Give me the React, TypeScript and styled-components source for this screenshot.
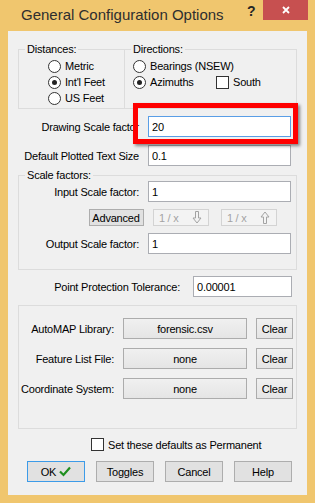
import React from "react";
import styled, { createGlobalStyle } from "styled-components";

const Global = createGlobalStyle`
  html, body { margin: 0; padding: 0; }
  body {
    font-family: "Liberation Sans", Arial, sans-serif;
    font-size: 11px;
    letter-spacing: -0.2px;
    color: #000;
  }
  * { box-sizing: border-box; }
`;

const Window = styled.div`
  width: 315px;
  height: 503px;
  background: #f0c66e;
  display: flex;
  flex-direction: column;
`;

const TitleBar = styled.div`
  height: 31px;
  display: flex;
  align-items: flex-start;
`;

const Title = styled.div`
  flex: 1;
  padding: 5px 0 0 21px;
  font-size: 15px;
  line-height: 20px;
  letter-spacing: 0;
  color: #2e2e2e;
  white-space: nowrap;
`;

const HelpGlyph = styled.div`
  width: 8px;
  margin: 4px 8px 0 0;
  font-weight: bold;
  font-size: 14px;
  line-height: 14px;
  color: #262626;
`;

const CloseBtn = styled.div`
  width: 45px;
  height: 20px;
  margin-right: 7px;
  background: #c75050;
  display: flex;
  align-items: center;
  justify-content: center;
`;

const Client = styled.div`
  flex: 1;
  margin: 0 8px 8px;
  background: #f0f0f0;
  position: relative;
  padding: 12px 10px 0 10px;
  display: flex;
  flex-direction: column;
`;

const Highlight = styled.div`
  position: absolute;
  left: 125px;
  top: 72px;
  width: 165px;
  height: 41px;
  border: 5px solid #f00;
  box-shadow: 2px 2px 3px rgba(0, 0, 0, 0.45);
  pointer-events: none;
`;

const TopRow = styled.div`
  display: flex;
`;

const Group = styled.fieldset<{ $w?: number; $h: number; $mt?: number; $flex?: boolean; $ml?: number }>`
  margin: ${(p) => p.$mt ?? 0}px 0 0 ${(p) => p.$ml ?? 0}px;
  padding: 0;
  min-width: 0;
  border: 1px solid #dcdcdc;
  height: ${(p) => p.$h}px;
  ${(p) => (p.$w ? `width: ${p.$w}px; flex: none;` : "")}
  ${(p) => (p.$flex ? "flex: 1;" : "")}
`;

const Legend = styled.legend`
  padding: 0 2px;
  margin-left: 6px;
  line-height: 12px;
  font-size: 11px;
`;

const OptionList = styled.div<{ $pl: number }>`
  display: flex;
  flex-direction: column;
  padding: 3px 0 0 ${(p) => p.$pl}px;
`;

const OptionRow = styled.div`
  display: flex;
  align-items: center;
  height: 16px;
`;

const Option = styled.div<{ $minW?: number }>`
  display: flex;
  align-items: center;
  ${(p) => (p.$minW ? `min-width: ${p.$minW}px;` : "")}
`;

const RadioCircle = styled.span<{ $on?: boolean }>`
  width: 13px;
  height: 13px;
  border-radius: 50%;
  border: 1px solid #333;
  background: #fff;
  display: inline-flex;
  align-items: center;
  justify-content: center;
  flex: none;
  &::after {
    content: "";
    width: 5px;
    height: 5px;
    border-radius: 50%;
    background: #222;
    display: ${(p) => (p.$on ? "block" : "none")};
  }
`;

const CheckSquare = styled.span`
  width: 13px;
  height: 13px;
  border: 1px solid #333;
  background: #fff;
  flex: none;
`;

const OptionText = styled.span`
  margin-left: 4px;
  white-space: nowrap;
`;

const Field = styled.div<{ $labelW: number; $inputW: number; $gap?: number; $mt?: number }>`
  display: grid;
  grid-template-columns: ${(p) => p.$labelW}px ${(p) => p.$inputW}px;
  column-gap: ${(p) => p.$gap ?? 9}px;
  align-items: center;
  margin-top: ${(p) => p.$mt ?? 0}px;
`;

const FieldLabel = styled.label`
  text-align: right;
  white-space: nowrap;
`;

const TextInput = styled.input<{ $focus?: boolean }>`
  height: 21px;
  width: 100%;
  margin: 0;
  background: #fff;
  border: 1px solid ${(p) => (p.$focus ? "#5a9ee6" : "#abadb3")};
  padding: 0 3px;
  font-family: inherit;
  font-size: 11px;
  letter-spacing: -0.2px;
  color: #000;
  outline: none;
  border-radius: 0;
`;

const ButtonRowSmall = styled.div`
  display: flex;
  margin-top: 7px;
  padding-left: 70px;
`;

const SmallBtn = styled.button<{ $w: number; $ml?: number; $disabled?: boolean }>`
  width: ${(p) => p.$w}px;
  height: 17px;
  margin: 0 0 0 ${(p) => p.$ml ?? 0}px;
  padding: 0 6px 0 5px;
  font-family: inherit;
  font-size: 11px;
  letter-spacing: -0.2px;
  border: 1px solid ${(p) => (p.$disabled ? "#d3d3d3" : "#adadad")};
  background: ${(p) => (p.$disabled ? "#f3f3f3" : "#e1e1e1")};
  color: ${(p) => (p.$disabled ? "#a3a3a3" : "#000")};
  display: flex;
  align-items: center;
  justify-content: ${(p) => (p.$disabled ? "space-between" : "center")};
  border-radius: 0;
`;

const Recip = styled.span`
  letter-spacing: 2.5px;
`;

const LibRows = styled.div`
  display: flex;
  flex-direction: column;
  gap: 9px;
  padding-top: 12px;
`;

const LibRow = styled.div`
  display: grid;
  grid-template-columns: 95px 124px 37px;
  column-gap: 9px;
  align-items: center;
`;

const LibButton = styled.button`
  height: 21px;
  margin: 0;
  padding: 0;
  font-family: inherit;
  font-size: 11px;
  letter-spacing: -0.2px;
  color: #000;
  border: 1px solid #acacac;
  background: linear-gradient(#f0f0f0, #e5e5e5);
  border-radius: 0;
`;

const CheckRow = styled.div`
  display: flex;
  align-items: center;
  margin-top: 9px;
  padding-left: 73px;
  height: 13px;
`;

const DialogButtons = styled.div`
  display: flex;
  gap: 11px;
  margin-top: 10px;
  padding-left: 9px;
`;

const DialogBtn = styled.button<{ $default?: boolean }>`
  width: 58px;
  height: 21px;
  margin: 0;
  padding: 0;
  font-family: inherit;
  font-size: 11px;
  letter-spacing: -0.2px;
  color: #000;
  border: 1px solid ${(p) => (p.$default ? "#3c9be8" : "#adadad")};
  background: #e1e1e1;
  display: flex;
  align-items: center;
  justify-content: center;
  gap: 3px;
  border-radius: 0;
`;

const ArrowDown = () => (
  <svg width="10" height="13" viewBox="0 0 10 13">
    <path d="M3.5 0.5 H6.5 V7 H9 L5 12 L1 7 H3.5 Z" fill="none" stroke="#a3a3a3" strokeWidth="1" />
  </svg>
);

const ArrowUp = () => (
  <svg width="10" height="13" viewBox="0 0 10 13">
    <path d="M3.5 12.5 H6.5 V6 H9 L5 1 L1 6 H3.5 Z" fill="none" stroke="#a3a3a3" strokeWidth="1" />
  </svg>
);

const Tick = () => (
  <svg width="12" height="11" viewBox="0 0 12 11">
    <path d="M1 5.5 L4.5 9 L11 1.5" fill="none" stroke="#1f8f1f" strokeWidth="2.2" />
  </svg>
);

const CloseX = () => (
  <svg width="8" height="8" viewBox="0 0 8 8">
    <path d="M1 1 L7 7 M7 1 L1 7" stroke="#fff" strokeWidth="1.8" />
  </svg>
);

export default function App() {
  return (
    <>
      <Global />
      <Window>
        <TitleBar>
          <Title>General Configuration Options</Title>
          <HelpGlyph>?</HelpGlyph>
          <CloseBtn>
            <CloseX />
          </CloseBtn>
        </TitleBar>
        <Client>
          <TopRow>
            <Group $w={107} $h={66}>
              <Legend>Distances:</Legend>
              <OptionList $pl={29}>
                <OptionRow>
                  <Option>
                    <RadioCircle />
                    <OptionText>Metric</OptionText>
                  </Option>
                </OptionRow>
                <OptionRow>
                  <Option>
                    <RadioCircle $on />
                    <OptionText>Int'l Feet</OptionText>
                  </Option>
                </OptionRow>
                <OptionRow>
                  <Option>
                    <RadioCircle />
                    <OptionText>US Feet</OptionText>
                  </Option>
                </OptionRow>
              </OptionList>
            </Group>
            <Group $flex $h={66} $ml={-1}>
              <Legend>Directions:</Legend>
              <OptionList $pl={8}>
                <OptionRow>
                  <Option>
                    <RadioCircle />
                    <OptionText>Bearings (NSEW)</OptionText>
                  </Option>
                </OptionRow>
                <OptionRow>
                  <Option $minW={83}>
                    <RadioCircle $on />
                    <OptionText>Azimuths</OptionText>
                  </Option>
                  <Option>
                    <CheckSquare />
                    <OptionText>South</OptionText>
                  </Option>
                </OptionRow>
              </OptionList>
            </Group>
          </TopRow>

          <Field $labelW={121} $inputW={143} $mt={7}>
            <FieldLabel>Drawing Scale factor</FieldLabel>
            <TextInput $focus readOnly value="20" />
          </Field>
          <Field $labelW={121} $inputW={143} $mt={8}>
            <FieldLabel>Default Plotted Text Size</FieldLabel>
            <TextInput readOnly value="0.1" />
          </Field>

          <Group $h={101} $mt={3}>
            <Legend>Scale factors:</Legend>
            <Field $labelW={120} $inputW={143}>
              <FieldLabel>Input Scale factor:</FieldLabel>
              <TextInput readOnly value="1" />
            </Field>
            <ButtonRowSmall>
              <SmallBtn $w={55}>Advanced</SmallBtn>
              <SmallBtn $w={56} $ml={9} $disabled>
                <Recip>1/x</Recip>
                <ArrowDown />
              </SmallBtn>
              <SmallBtn $w={56} $ml={12} $disabled>
                <Recip>1/x</Recip>
                <ArrowUp />
              </SmallBtn>
            </ButtonRowSmall>
            <Field $labelW={120} $inputW={143} $mt={7}>
              <FieldLabel>Output Scale factor:</FieldLabel>
              <TextInput readOnly value="1" />
            </Field>
          </Group>

          <Field $labelW={162} $inputW={99} $gap={13} $mt={6}>
            <FieldLabel>Point Protection Tolerance:</FieldLabel>
            <TextInput readOnly value="0.00001" />
          </Field>

          <Group $h={124} $mt={8}>
            <LibRows>
              <LibRow>
                <FieldLabel>AutoMAP Library:</FieldLabel>
                <LibButton>forensic.csv</LibButton>
                <LibButton>Clear</LibButton>
              </LibRow>
              <LibRow>
                <FieldLabel>Feature List File:</FieldLabel>
                <LibButton>none</LibButton>
                <LibButton>Clear</LibButton>
              </LibRow>
              <LibRow>
                <FieldLabel>Coordinate System:</FieldLabel>
                <LibButton>none</LibButton>
                <LibButton>Clear</LibButton>
              </LibRow>
            </LibRows>
          </Group>

          <CheckRow>
            <CheckSquare />
            <OptionText>Set these defaults as Permanent</OptionText>
          </CheckRow>

          <DialogButtons>
            <DialogBtn $default>
              OK
              <Tick />
            </DialogBtn>
            <DialogBtn>Toggles</DialogBtn>
            <DialogBtn>Cancel</DialogBtn>
            <DialogBtn>Help</DialogBtn>
          </DialogButtons>

          <Highlight />
        </Client>
      </Window>
    </>
  );
}
